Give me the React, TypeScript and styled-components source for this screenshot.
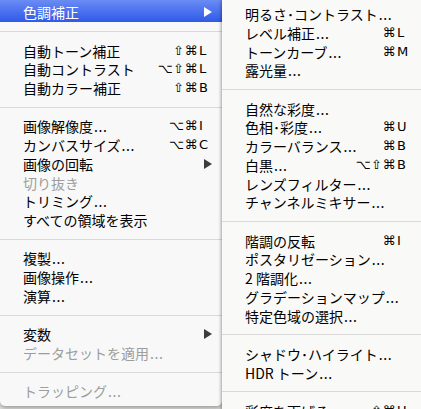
import React from "react";
import styled, { createGlobalStyle } from "styled-components";

const Global = createGlobalStyle`
  html, body { margin: 0; padding: 0; }
  body {
    width: 421px;
    height: 409px;
    overflow: hidden;
    background: #e4e6e3;
    font-family: "Noto Sans CJK JP", sans-serif;
  }
`;

const Screen = styled.div`
  display: flex;
  align-items: flex-start;
  width: 421px;
  height: 409px;
  overflow: hidden;
`;

const MainMenu = styled.div`
  position: relative;
  z-index: 1;
  flex: none;
  width: 222px;
  display: flex;
  flex-direction: column;
  padding-bottom: 5px;
  background: #f8f8f8;
  border-radius: 0 0 5px 5px;
  box-shadow: 0 2px 5px rgba(0, 0, 0, 0.35);
`;

const SubMenu = styled.div`
  position: relative;
  z-index: 2;
  flex: none;
  width: 199px;
  display: flex;
  flex-direction: column;
  padding-top: 5px;
  background: #f9f9f8;
  box-shadow: -1px 0 3px rgba(0, 0, 0, 0.35);
`;

const Row = styled.div<{ $disabled?: boolean; $pr: number }>`
  display: grid;
  grid-template-columns: max-content 1fr 14px;
  align-items: center;
  height: 18.75px;
  padding: 0 ${(p) => p.$pr}px 0 23px;
  font-size: 14px;
  line-height: 18.75px;
  color: ${(p) => (p.$disabled ? "#9d9d9d" : "#000")};
  white-space: nowrap;
`;

const ActiveRow = styled(Row)`
  height: 22px;
  padding-top: 2px;
  box-sizing: border-box;
  line-height: 20px;
  color: #fff;
  background: linear-gradient(#6a8cf4 0%, #4c72ee 50%, #2f5ae8 100%);
`;

const Separator = styled.div`
  height: 19.5px;
  box-sizing: border-box;
  padding-top: 9px;
  &::after {
    content: "";
    display: block;
    height: 1px;
    background: #d9d9d9;
  }
`;

const Label = styled.span``;

const Dots = styled.span`
  letter-spacing: 0.6px;
  margin-left: 1px;
`;

const Mods = styled.span`
  font-family: "DejaVu Sans", sans-serif;
  font-size: 13px;
  text-align: right;
  padding-right: 1px;
  letter-spacing: 0.5px;
`;

const Key = styled.span`
  font-family: "DejaVu Sans", sans-serif;
  font-size: 13px;
  display: flex;
  justify-content: flex-start;
`;

const ArrowCell = styled.span`
  display: flex;
  justify-content: flex-end;
  padding-right: 1px;
`;

const Arrow = ({ color }: { color: string }) => (
  <svg width="8" height="10" viewBox="0 0 8 10">
    <polygon points="0,0 8,5 0,10" fill={color} />
  </svg>
);

type Item =
  | "sep"
  | {
      label: string;
      dots?: boolean;
      mods?: string;
      k?: string;
      arrow?: boolean;
      disabled?: boolean;
      active?: boolean;
    };

const mainItems: Item[] = [
  { label: "色調補正", arrow: true, active: true },
  "sep",
  { label: "自動トーン補正", mods: "⇧⌘", k: "L" },
  { label: "自動コントラスト", mods: "⌥⇧⌘", k: "L" },
  { label: "自動カラー補正", mods: "⇧⌘", k: "B" },
  "sep",
  { label: "画像解像度", dots: true, mods: "⌥⌘", k: "I" },
  { label: "カンバスサイズ", dots: true, mods: "⌥⌘", k: "C" },
  { label: "画像の回転", arrow: true },
  { label: "切り抜き", disabled: true },
  { label: "トリミング", dots: true },
  { label: "すべての領域を表示" },
  "sep",
  { label: "複製", dots: true },
  { label: "画像操作", dots: true },
  { label: "演算", dots: true },
  "sep",
  { label: "変数", arrow: true },
  { label: "データセットを適用", dots: true, disabled: true },
  "sep",
  { label: "トラッピング", dots: true, disabled: true },
];

const subItems: Item[] = [
  { label: "明るさ･コントラスト", dots: true },
  { label: "レベル補正", dots: true, mods: "⌘", k: "L" },
  { label: "トーンカーブ", dots: true, mods: "⌘", k: "M" },
  { label: "露光量", dots: true },
  "sep",
  { label: "自然な彩度", dots: true },
  { label: "色相･彩度", dots: true, mods: "⌘", k: "U" },
  { label: "カラーバランス", dots: true, mods: "⌘", k: "B" },
  { label: "白黒", dots: true, mods: "⌥⇧⌘", k: "B" },
  { label: "レンズフィルター", dots: true },
  { label: "チャンネルミキサー", dots: true },
  "sep",
  { label: "階調の反転", mods: "⌘", k: "I" },
  { label: "ポスタリゼーション", dots: true },
  { label: "2 階調化", dots: true },
  { label: "グラデーションマップ", dots: true },
  { label: "特定色域の選択", dots: true },
  "sep",
  { label: "シャドウ･ハイライト", dots: true },
  { label: "HDR トーン", dots: true },
  "sep",
  { label: "彩度を下げる", mods: "⇧⌘", k: "U" },
];

const renderItems = (items: Item[], pr: number) =>
  items.map((it, i) => {
    if (it === "sep") return <Separator key={i} />;
    const R = it.active ? ActiveRow : Row;
    return (
      <R key={i} $pr={pr} $disabled={it.disabled}>
        <Label>
          {it.label}
          {it.dots && <Dots>...</Dots>}
        </Label>
        <Mods>{it.mods ?? ""}</Mods>
        {it.arrow ? (
          <ArrowCell>
            <Arrow color={it.active ? "#ffffff" : "#3c3c3c"} />
          </ArrowCell>
        ) : (
          <Key>{it.k ?? ""}</Key>
        )}
      </R>
    );
  });

export default function App() {
  return (
    <>
      <Global />
      <Screen>
        <MainMenu>{renderItems(mainItems, 9)}</MainMenu>
        <SubMenu>{renderItems(subItems, 10)}</SubMenu>
      </Screen>
    </>
  );
}
